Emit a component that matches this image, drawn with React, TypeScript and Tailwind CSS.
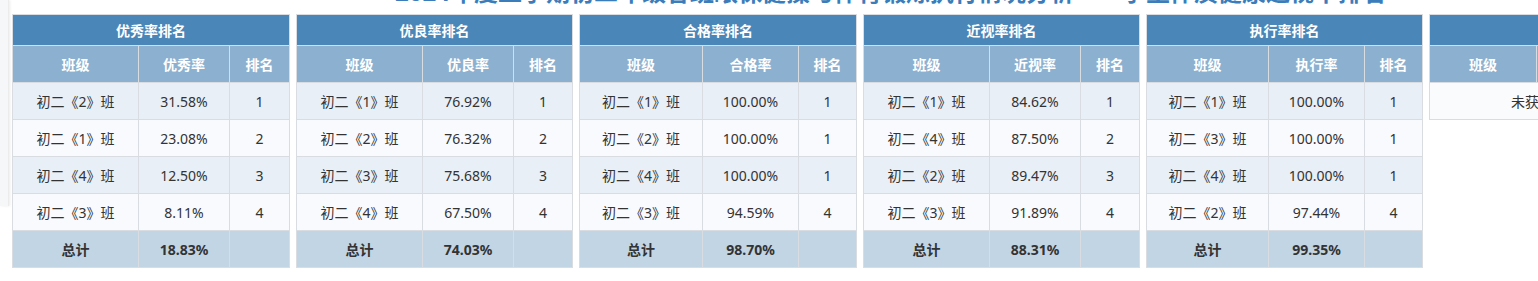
import React from "react";

type Row = { name: string; rate: string; rank: string };
type T = { title: string; col: string; rows: Row[]; total: string; w: [string, string, string] };

const tables: T[] = [
  {
    title: "优秀率排名",
    col: "优秀率",
    rows: [
      { name: "初二《2》班", rate: "31.58%", rank: "1" },
      { name: "初二《1》班", rate: "23.08%", rank: "2" },
      { name: "初二《4》班", rate: "12.50%", rank: "3" },
      { name: "初二《3》班", rate: "8.11%", rank: "4" },
    ],
    total: "18.83%",
    w: ["w-[126px]", "w-[91px]", "w-[60px]"],
  },
  {
    title: "优良率排名",
    col: "优良率",
    rows: [
      { name: "初二《1》班", rate: "76.92%", rank: "1" },
      { name: "初二《2》班", rate: "76.32%", rank: "2" },
      { name: "初二《3》班", rate: "75.68%", rank: "3" },
      { name: "初二《4》班", rate: "67.50%", rank: "4" },
    ],
    total: "74.03%",
    w: ["w-[126px]", "w-[91px]", "w-[59px]"],
  },
  {
    title: "合格率排名",
    col: "合格率",
    rows: [
      { name: "初二《1》班", rate: "100.00%", rank: "1" },
      { name: "初二《2》班", rate: "100.00%", rank: "1" },
      { name: "初二《4》班", rate: "100.00%", rank: "1" },
      { name: "初二《3》班", rate: "94.59%", rank: "4" },
    ],
    total: "98.70%",
    w: ["w-[123px]", "w-[96px]", "w-[58px]"],
  },
  {
    title: "近视率排名",
    col: "近视率",
    rows: [
      { name: "初二《1》班", rate: "84.62%", rank: "1" },
      { name: "初二《4》班", rate: "87.50%", rank: "2" },
      { name: "初二《2》班", rate: "89.47%", rank: "3" },
      { name: "初二《3》班", rate: "91.89%", rank: "4" },
    ],
    total: "88.31%",
    w: ["w-[126px]", "w-[91px]", "w-[59px]"],
  },
  {
    title: "执行率排名",
    col: "执行率",
    rows: [
      { name: "初二《1》班", rate: "100.00%", rank: "1" },
      { name: "初二《3》班", rate: "100.00%", rank: "1" },
      { name: "初二《4》班", rate: "100.00%", rank: "1" },
      { name: "初二《2》班", rate: "97.44%", rank: "4" },
    ],
    total: "99.35%",
    w: ["w-[122px]", "w-[96px]", "w-[58px]"],
  },
];

const cell = "flex items-center justify-center border-r border-b border-[#d9dde2] shrink-0";

function RankTable({ t }: { t: T }) {
  return (
    <div className="shrink-0 border-l border-t border-[#d9dde2] flex flex-col">
      <div className="h-[31px] flex items-center justify-center bg-[#4a86b8] border-r border-b border-[#d9dde2] text-white font-bold text-[14px]">
        {t.title}
      </div>
      <div className="flex h-[37px] bg-[#8cb0cf] text-white font-bold text-[14px]">
        <div className={`${cell} ${t.w[0]}`}>班级</div>
        <div className={`${cell} ${t.w[1]}`}>{t.col}</div>
        <div className={`${cell} ${t.w[2]}`}>排名</div>
      </div>
      {t.rows.map((r, i) => (
        <div
          key={i}
          className={`flex h-[37px] text-[14px] text-[#333] ${i % 2 === 0 ? "bg-[#e8eff7]" : "bg-[#f8fafe]"}`}
        >
          <div className={`${cell} ${t.w[0]}`}>{r.name}</div>
          <div className={`${cell} ${t.w[1]}`}>{r.rate}</div>
          <div className={`${cell} ${t.w[2]}`}>{r.rank}</div>
        </div>
      ))}
      <div className="flex h-[37px] bg-[#c2d5e4] text-[14px] text-[#333] font-bold">
        <div className={`${cell} ${t.w[0]}`}>总计</div>
        <div className={`${cell} ${t.w[1]}`}>{t.total}</div>
        <div className={`${cell} ${t.w[2]}`}></div>
      </div>
    </div>
  );
}

export default function App() {
  return (
    <div
      className="relative w-[1538px] h-[281px] overflow-hidden bg-white"
      style={{ fontFamily: '"Noto Sans", "Noto Sans CJK SC", sans-serif' }}
    >
      <div className="absolute left-0 top-0 w-[9px] h-[206px] bg-[#f6f7f8] border-r border-[#ececec] shadow-[1px_0_3px_rgba(0,0,0,0.08)]" />
      <div className="mt-[-20px] h-[24px] leading-[24px] pl-[395px] text-[24px] font-bold text-[#3b7dba] whitespace-nowrap">
        2024年度上学期初二年级各班眼保健操与体育锻炼执行情况分析——学生体质健康近视率排名
      </div>
      <div className="mt-[10px] pl-[12px] flex gap-[6px] items-start">
        {tables.map((t, i) => (
          <RankTable key={i} t={t} />
        ))}
        <div className="shrink-0 border-l border-t border-[#d9dde2] flex flex-col w-[304px]">
          <div className="h-[31px] flex items-center justify-center bg-[#4a86b8] border-r border-b border-[#d9dde2] text-white font-bold text-[14px]">
            体质健康排名
          </div>
          <div className="flex h-[37px] bg-[#8cb0cf] text-white font-bold text-[14px]">
            <div className={`${cell} w-[107px]`}>班级</div>
            <div className={`${cell} w-[126px]`}>体质健康达标率</div>
            <div className={`${cell} w-[70px]`}>排名</div>
          </div>
          <div className="flex h-[37px] bg-[#fafbfd] text-[14px] text-[#333]">
            <div className={`${cell} w-[303px]`}>未获取到相关统计数据</div>
          </div>
        </div>
      </div>
    </div>
  );
}
